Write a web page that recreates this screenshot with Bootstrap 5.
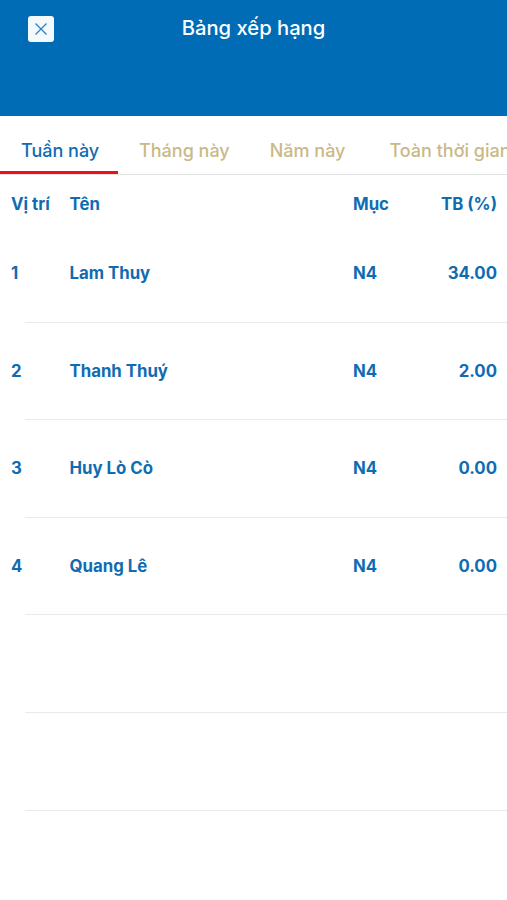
<!DOCTYPE html>
<html lang="vi">
<head>
<meta charset="utf-8">
<title>Bảng xếp hạng</title>
<link href="https://cdn.jsdelivr.net/npm/bootstrap@5.3.0/dist/css/bootstrap.min.css" rel="stylesheet">
<style>
html,body{height:100%}
body{font-family:Inter,"Liberation Sans",sans-serif;background:#fff;overflow:hidden}
.hdr{height:116px;background:#006cb5;padding:16px 0 0 28px;position:relative}
.closebtn{width:26px;height:26px;background:#f4f9fd;border:0;border-radius:3px;padding:0;display:flex;align-items:center;justify-content:center}
.hdr-title{position:absolute;left:0;right:0;top:15px;text-align:center;color:#fff;font-size:20.2px;font-weight:500;line-height:26px;margin:0}
.tabbar{height:59px;border-bottom:1px solid #e2e2e2;flex-wrap:nowrap;overflow:hidden;align-items:stretch}
.tabitem{flex:none;font-size:18px;font-weight:500;color:#c9b987;line-height:24px;padding-top:23px;white-space:nowrap;text-decoration:none}
.tabitem.on{color:#0f6cb2;width:118px;padding-left:21px;position:relative}
.tabitem.on::after{content:"";position:absolute;left:0;right:0;bottom:0;height:3px;background:#f0101c}
.t2{margin-left:21px}.t3{margin-left:40px}.t4{margin-left:44px}
.rowline{display:flex;color:#0f6cb2;font-size:16.8px;font-weight:700;line-height:22px}
.c1{width:69.5px;padding-left:11px;flex:none}
.c2{flex:1 1 0;min-width:0}
.c3{width:70px;flex:none}
.c4{width:84px;padding-right:10px;text-align:right;flex:none}
.headline{height:50px;padding-top:18px}
.datarow{height:97.6px;position:relative;padding-top:37px}
.datarow::after{content:"";position:absolute;left:25px;right:0;bottom:0;height:1px;background:#e9e9e9}
</style>
</head>
<body>
<header class="hdr">
  <button class="closebtn" type="button" aria-label="Đóng">
    <svg width="14" height="14" viewBox="0 0 14 14" fill="none" stroke="#2f7fbd" stroke-width="1.3"><path d="M1.5 1.5 12.5 12.5M12.5 1.5 1.5 12.5"/></svg>
  </button>
  <h1 class="hdr-title">Bảng xếp hạng</h1>
</header>
<nav class="nav tabbar">
  <a class="tabitem on" href="#">Tuần này</a>
  <a class="tabitem t2" href="#">Tháng này</a>
  <a class="tabitem t3" href="#">Năm này</a>
  <a class="tabitem t4" href="#">Toàn thời gian</a>
</nav>
<div class="rowline headline"><div class="c1">Vị trí</div><div class="c2">Tên</div><div class="c3">Mục</div><div class="c4">TB (%)</div></div>
<div class="rowline datarow"><div class="c1">1</div><div class="c2">Lam Thuy</div><div class="c3">N4</div><div class="c4">34.00</div></div>
<div class="rowline datarow"><div class="c1">2</div><div class="c2">Thanh Thuý</div><div class="c3">N4</div><div class="c4">2.00</div></div>
<div class="rowline datarow"><div class="c1">3</div><div class="c2">Huy Lò Cò</div><div class="c3">N4</div><div class="c4">0.00</div></div>
<div class="rowline datarow"><div class="c1">4</div><div class="c2">Quang Lê</div><div class="c3">N4</div><div class="c4">0.00</div></div>
<div class="rowline datarow"></div>
<div class="rowline datarow"></div>
<script src="https://cdn.jsdelivr.net/npm/bootstrap@5.3.0/dist/js/bootstrap.bundle.min.js"></script>
</body>
</html>
